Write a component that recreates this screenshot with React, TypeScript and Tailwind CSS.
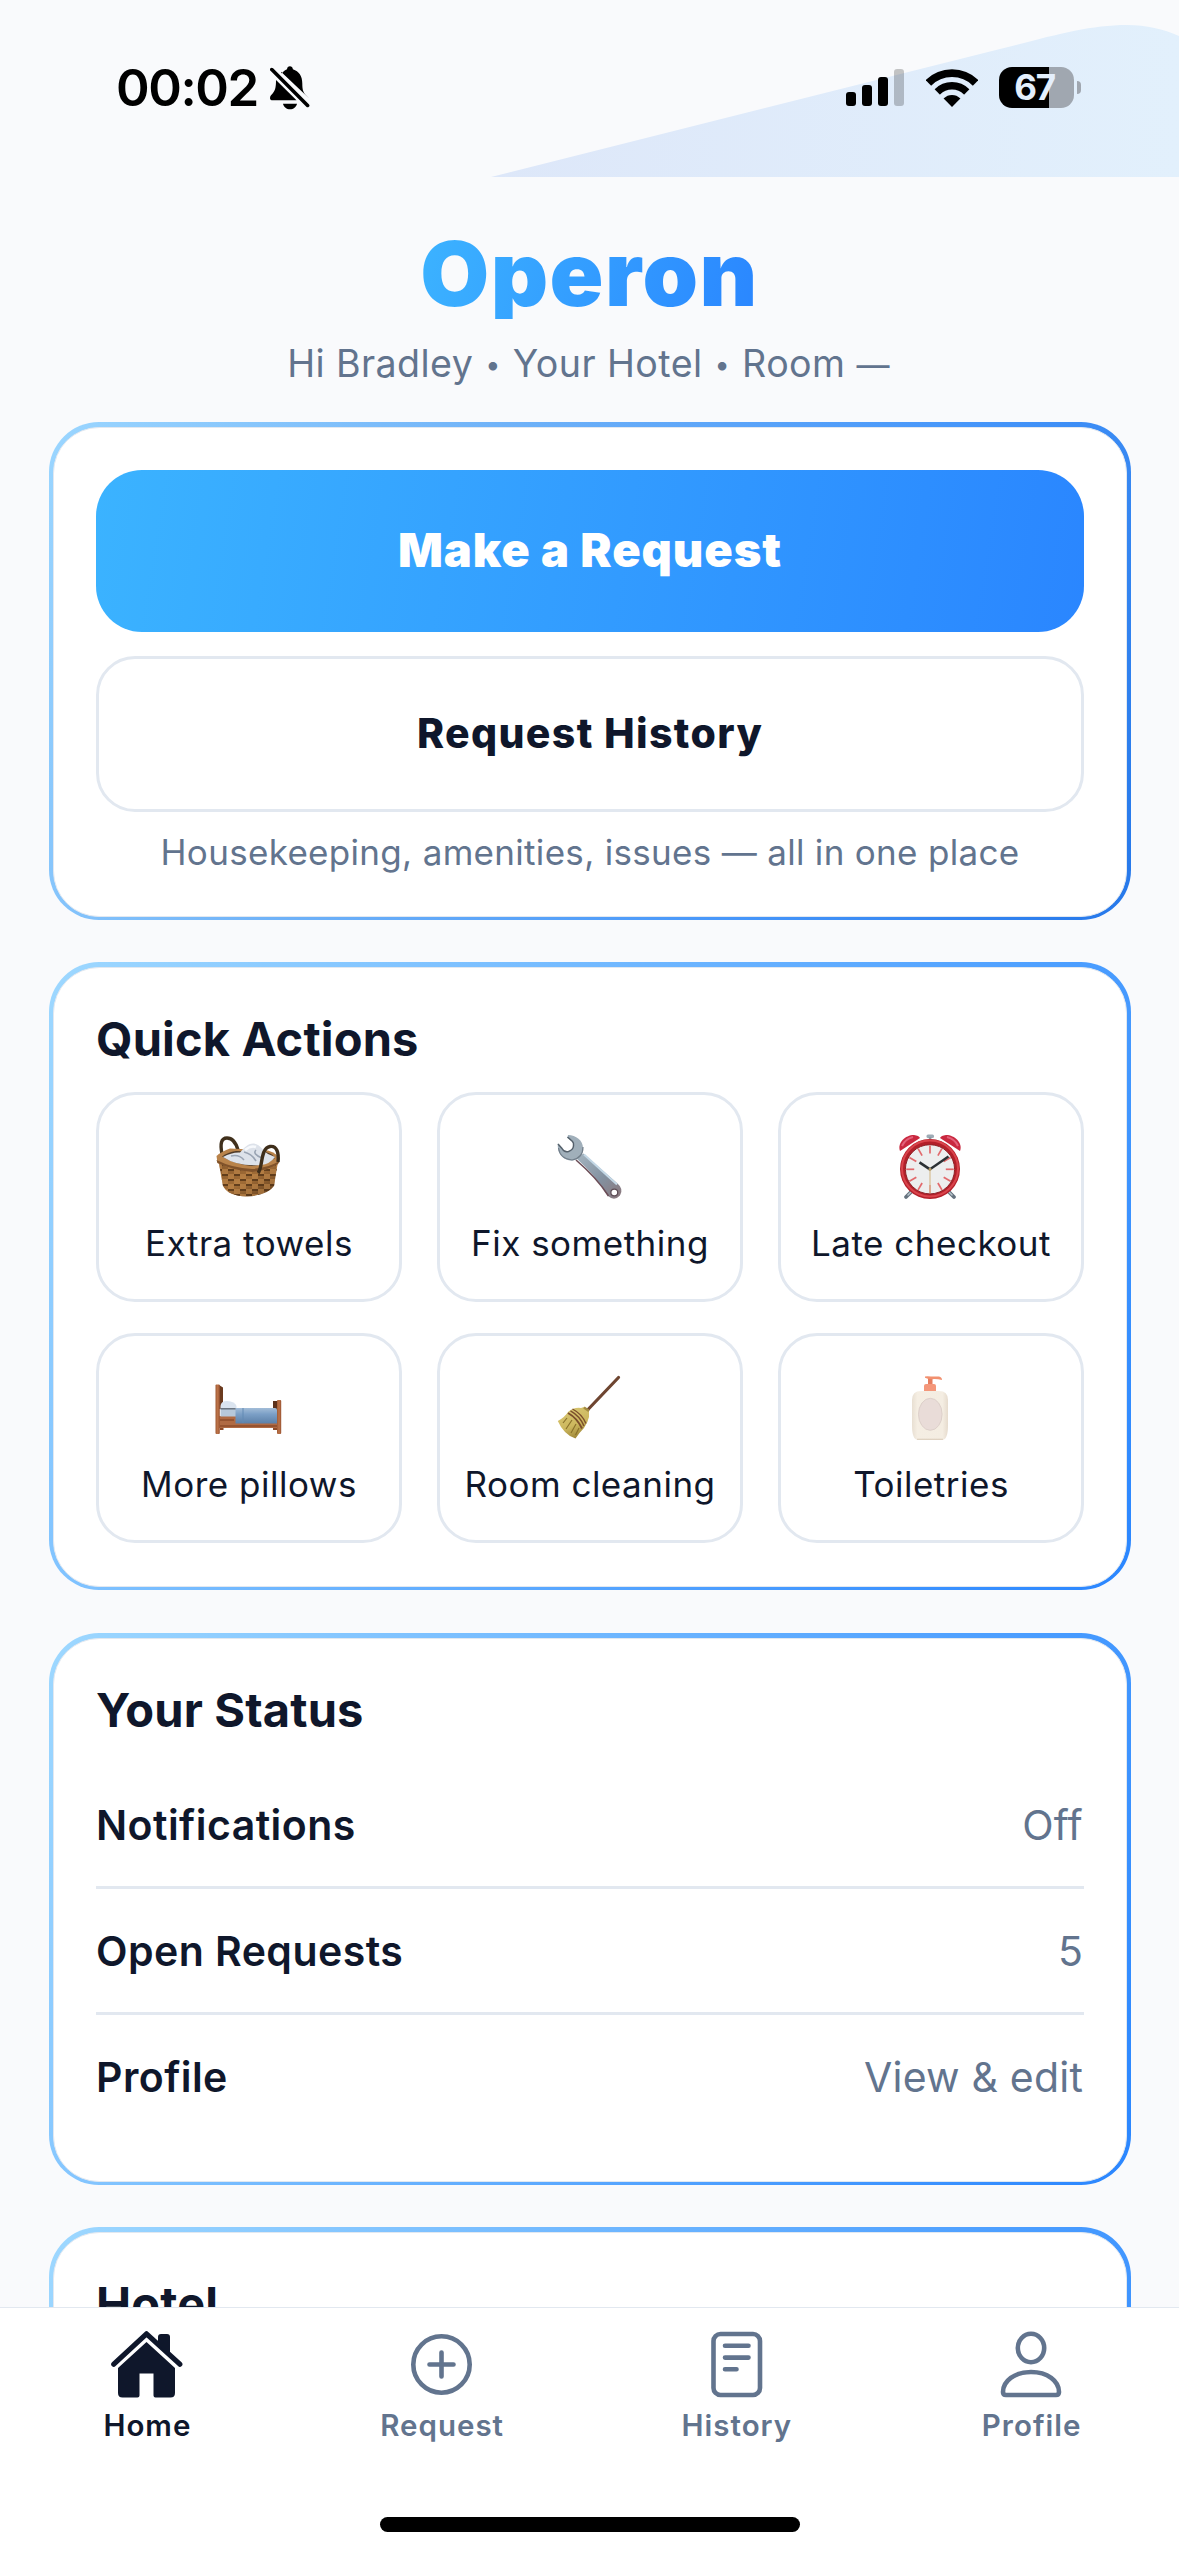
import type { ReactNode } from "react";

function BellOff() {
  return (
    <svg width="40" height="44" viewBox="0 0 40 44" className="block">
      <g fill="#000">
        <path d="M11 8.5C13.200 5.500 15 4.200 17 3.300C17.400 1 18.200 .3 19.900 .3C21.600 .3 22.500 1 22.900 3.300C29 5.400 32.300 10 32.300 17.500C32.300 23.500 33 25.600 35.300 28.500L39 32.300L11 5.800Z" />
        <path d="M6 14L26.500 34.300H2.800C.8 34.300 0 33.400 0 31.900C0 30 1.700 28.700 3 27C5.500 24 6 20 6 14Z" />
        <path d="M13 37.700H27C26.200 41.200 23.400 43.300 20 43.300C16.600 43.300 13.800 41.200 13 37.700Z" />
      </g>
      <path d="M5.600 3.200L39.500 36.500" stroke="#f9fafc" strokeWidth="3" />
      <path d="M1.800 3.600L37.600 39.400" stroke="#000" strokeWidth="3.600" strokeLinecap="round" />
    </svg>
  );
}

function Signal() {
  return (
    <svg width="58" height="37" viewBox="0 0 58 37" className="block">
      <rect x="0" y="23" width="10" height="14" rx="3" />
      <rect x="16" y="16" width="10" height="21" rx="3" />
      <rect x="32" y="8" width="10" height="29" rx="3" />
      <rect x="48" y="0" width="10" height="37" rx="3" opacity=".22" />
    </svg>
  );
}

function Wifi() {
  return (
    <svg width="52" height="38" viewBox="0 0 52 38" className="block">
      <defs>
        <clipPath id="wedge">
          <path d="M26 38L-3 8.500L-3 -6H55V8.500Z" />
        </clipPath>
      </defs>
      <g clipPath="url(#wedge)">
        <circle cx="26" cy="37.500" r="33.400" fill="none" stroke="#000" strokeWidth="7.800" />
        <circle cx="26" cy="37.500" r="20.700" fill="none" stroke="#000" strokeWidth="7.600" />
        <circle cx="26" cy="37.500" r="11.500" />
      </g>
    </svg>
  );
}

function Battery() {
  return (
    <div className="flex items-center gap-[3px]">
      <div className="flex h-[41px] w-[75px] items-center justify-center rounded-[13px] bg-[linear-gradient(90deg,#000_50px,#a0a7b0_50px)] pr-[4px]">
        <span className="text-[35px] leading-[41px] font-bold tracking-[-1.2px] text-[#e4effc]">67</span>
      </div>
      <div className="h-[13px] w-[4px] rounded-r-full bg-[#a0a7b0]" />
    </div>
  );
}

function StatusBar() {
  return (
    <div className="relative h-[177px] shrink-0 overflow-hidden">
      <svg width="1179" height="177" viewBox="0 0 1179 177" className="absolute inset-0">
        <defs>
          <linearGradient id="wave" x1="491" y1="0" x2="1179" y2="0" gradientUnits="userSpaceOnUse">
            <stop offset="0" stopColor="#dde7f9" />
            <stop offset="1" stopColor="#e2f0fc" />
          </linearGradient>
        </defs>
        <path d="M491 177L1000 49C1052 36 1088 25 1127 25C1147 25 1163 29 1179 36V177Z" fill="url(#wave)" />
      </svg>
      <div className="relative flex h-full items-start justify-between pr-[98px] pl-[116px]">
        <div className="flex items-center pt-[62px]">
          <span className="text-[51px] leading-[52px] font-semibold tracking-[-1.400px] text-black">00:02</span>
          <div className="ml-[12px]">
            <BellOff />
          </div>
        </div>
        <div className="flex items-center pt-[67px]">
          <Signal />
          <div className="ml-[22px]">
            <Wifi />
          </div>
          <div className="ml-[21px]">
            <Battery />
          </div>
        </div>
      </div>
    </div>
  );
}

function Basket() {
  return (
    <>
      <defs>
        <linearGradient id="wicker" x1="0" y1="0" x2="1" y2="1">
          <stop offset="0" stopColor="#8a5a2c" />
          <stop offset=".5" stopColor="#a06c36" />
          <stop offset="1" stopColor="#5f3c1c" />
        </linearGradient>
        <pattern id="weave" width="12" height="10" patternUnits="userSpaceOnUse">
          <rect width="6" height="5" fill="#c98f50" opacity=".5" />
          <rect x="6" y="5" width="6" height="5" fill="#c98f50" opacity=".5" />
          <rect x="6" width="6" height="2" fill="#4e3014" opacity=".75" />
          <rect y="5" width="6" height="2" fill="#4e3014" opacity=".75" />
        </pattern>
      </defs>
      <path d="M6 20C4 10 5 4 11 4C17 4 20 9 22 16" fill="none" stroke="#40301c" strokeWidth="3.400" />
      <path d="M2.500 27L7 52Q12 62 31 62.500Q52 61 58 52L62 27Z" fill="url(#wicker)" />
      <path d="M2.500 27L7 52Q12 62 31 62.500Q52 61 58 52L62 27Z" fill="url(#weave)" />
      <path d="M.5 22Q6 17 14 14.500L52 16.500Q62 20 64 25L62 30Q50 37 36 38Q16 36 1.500 29Z" fill="#b9834a" />
      <path d="M.5 26Q16 34 36 35Q52 34 63.500 27L62 30Q50 37 36 38Q16 36 1.500 29Z" fill="#80522a" />
      <path d="M6 22.500Q12 18 20 17L50 18Q57 20 59 24Q50 31 36 32Q18 30 6 22.500Z" fill="#4f3a26" />
      <path d="M7 23Q16 18 24 18.500C28 14 32 9 38 9.500C45 11 47 17 52 20L59 23Q54 30 45 31Q22 33 7 23Z" fill="#dde2ea" />
      <path d="M15 22Q23 20 28 26M28 18Q36 20 40 27M40 16Q36 20 46 24" fill="none" stroke="#9aa4b3" strokeWidth="1.600" />
      <path d="M29 16Q35 11 40 13" fill="none" stroke="#f7f9fc" strokeWidth="2.500" />
      <path d="M42 39C47 34 44 14 54 12.500C61 11.500 63 19 62 28" fill="none" stroke="#3e2e1b" strokeWidth="3.400" />
    </>
  );
}

function Wrench() {
  return (
    <>
      <defs>
        <linearGradient id="steel" x1="24" y1="24" x2="62" y2="62" gradientUnits="userSpaceOnUse">
          <stop offset="0" stopColor="#9fafbb" />
          <stop offset=".55" stopColor="#8391a0" />
          <stop offset="1" stopColor="#8a7a80" />
        </linearGradient>
      </defs>
      <path d="M19 24L26.500 19.500L60.500 49.500Q67 55 63 61.500Q57.500 67.500 51 62Q40 43 19 24Z" fill="url(#steel)" />
      <path d="M19 26Q40 44 51.500 62" fill="none" stroke="#6b4c56" strokeWidth="1.600" />
      <path d="M27 20.500L60 50.500" fill="none" stroke="#c4d8e6" strokeWidth="2" />
      <path d="M11 1C19 1 26 6.500 26 14C26.500 21 22 26 15 26.500C6 26.500 0 19 .8 9.500L5 14.500Q7 18.500 11.500 17.500Q16 16 16.500 12Q17 9 15.500 7.500L10.500 4Z" fill="#a0afba" />
      <path d="M1 10L5 14.500Q7 18.500 11.500 17.500Q16 16 16.500 12Q17 9 15.500 7.500L10.500 3" fill="none" stroke="#54606b" strokeWidth="1.500" />
      <path d="M1.500 14Q3 25 15 26Q26 24 26 13" fill="none" stroke="#727f8b" strokeWidth="1.200" />
      <circle cx="57.300" cy="58.500" r="3.400" fill="#fff" stroke="#5d4c55" strokeWidth="1.200" />
    </>
  );
}

function AlarmClock() {
  const ticks = [0, 30, 60, 90, 120, 150, 180, 210, 240, 270, 300, 330];
  return (
    <>
      <path d="M15 56L8 63M49 56L56 63" stroke="#66737f" strokeWidth="3.800" strokeLinecap="round" />
      <path d="M14 57L10 61M50 57L54 61" stroke="#bac6ce" strokeWidth="1.500" strokeLinecap="round" />
      <rect x="28.500" y=".5" width="7.500" height="3.400" rx="1.500" fill="#9eabb5" />
      <rect x="30.800" y="3" width="2.600" height="4" fill="#8d99a3" />
      <path d="M2 17C-1 9 7 1 16 1Q21 1.500 22 4Z" fill="#c9283f" />
      <path d="M62 17C65 9 57 1 48 1Q43 1.500 42 4Z" fill="#c9283f" />
      <path d="M4 12Q7 5 15 3M49 3Q57 5 60 12" fill="none" stroke="#e3607a" strokeWidth="2" />
      <circle cx="32" cy="35" r="30" fill="#b3202a" />
      <circle cx="32" cy="34.500" r="28" fill="none" stroke="#d9434b" strokeWidth="2" />
      <circle cx="32" cy="35.300" r="24.600" fill="#edeeee" stroke="#8e2227" strokeWidth="1" />
      {ticks.map((a) => (
        <path key={a} d="M32 11.500V19.500" transform={`rotate(${a} 32 35.300)`} stroke="#e2696c" strokeWidth="1.700" />
      ))}
      <path d="M32 35.300V59" stroke="#d8c29a" strokeWidth="1.300" />
      <path d="M32 35.300L21.500 28.300" stroke="#2b3033" strokeWidth="2.600" />
      <path d="M32 35.300L50.500 22.500" stroke="#2b3033" strokeWidth="2.400" />
      <circle cx="32" cy="35.300" r="1.500" fill="#b59d6a" />
    </>
  );
}

function Bed() {
  return (
    <>
      <defs>
        <linearGradient id="blanket" x1="0" y1="0" x2="0" y2="1">
          <stop offset="0" stopColor="#a3bdd8" />
          <stop offset=".4" stopColor="#7b9fc6" />
          <stop offset="1" stopColor="#5c80a8" />
        </linearGradient>
        <linearGradient id="wood" x1="0" y1="0" x2="1" y2="0">
          <stop offset="0" stopColor="#a05a34" />
          <stop offset=".5" stopColor="#bd7449" />
          <stop offset="1" stopColor="#985230" />
        </linearGradient>
      </defs>
      <path d="M3 10L7 12.500V34H3Z" fill="#6b3b1f" />
      <rect x="57" y="26" width="5" height="12" fill="#5c321c" />
      <rect x="4" y="50" width="3.500" height="5" fill="#8c4a29" />
      <rect x="57" y="50" width="4" height="5" fill="#8c4a29" />
      <rect x="3" y="41" width="59" height="12" fill="#b06a43" />
      <path d="M4 45H18M4 51H61" stroke="#8d4c2b" strokeWidth="1.500" />
      <rect x="4.500" y="34" width="16" height="7.500" fill="#b7c8da" />
      <path d="M4.500 31Q5 26 11 26Q19 26.500 20.500 31Q21 34 18 34H4.500Z" fill="#dbe4ef" />
      <path d="M4.500 33.800H20" stroke="#515a66" strokeWidth="1.200" />
      <path d="M19.500 33H59Q61 33 61 35V48.500H19.500Z" fill="url(#blanket)" />
      <path d="M27 33V48" stroke="#628ab4" strokeWidth="1" />
      <rect x="-.5" y="9.500" width="4.300" height="49.500" rx="1" fill="url(#wood)" />
      <rect x="61" y="25" width="4.200" height="34" rx="1" fill="url(#wood)" />
    </>
  );
}

function Broom() {
  return (
    <>
      <defs>
        <linearGradient id="straw" x1=".2" y1="0" x2=".6" y2="1">
          <stop offset="0" stopColor="#d8c673" />
          <stop offset=".6" stopColor="#cdb85e" />
          <stop offset="1" stopColor="#9c8436" />
        </linearGradient>
      </defs>
      <path d="M61.500 2.500L31 34.500" stroke="#6e4531" strokeWidth="3.200" strokeLinecap="round" />
      <path d="M27 32L32 35L32 42Q31 47 27 53Q22 58 18.500 63.500Q7 60 .8 46Q8 42 11 37Q17 32 24 33Z" fill="url(#straw)" />
      <path d="M6 48L10 43M9 54L15 45M14 58L19 49M18.500 60L22 53" stroke="#8a722b" strokeWidth="1.200" />
      <path d="M11 38Q20 43 25 53.500" fill="none" stroke="#7b4e2c" strokeWidth="1.900" />
      <path d="M13.500 35.800Q23 41 27 51" fill="none" stroke="#7b4e2c" strokeWidth="1.500" />
      <path d="M15.500 34Q25 39 29 48.500" fill="none" stroke="#7b4e2c" strokeWidth="1.300" />
      <path d="M27 32.500L32 36" stroke="#a38b42" strokeWidth="2.400" />
    </>
  );
}

function Lotion() {
  return (
    <>
      <defs>
        <linearGradient id="bottle" x1="0" y1="0" x2="1" y2="0">
          <stop offset="0" stopColor="#e8dfd2" />
          <stop offset=".15" stopColor="#f5eee3" />
          <stop offset=".85" stopColor="#f4ede2" />
          <stop offset="1" stopColor="#e6dbcd" />
        </linearGradient>
      </defs>
      <rect x="30" y="3" width="4.500" height="8" fill="#e67e60" />
      <path d="M27 1.500Q29 1 33 1.500H41Q44 2 44 5Q39 3.800 34 4.200Q29 4.200 27 2.800Z" fill="#f2906f" />
      <path d="M26 11Q26 9 28 9H36Q38 9 38 11V17H26Z" fill="#f4977a" />
      <path d="M14 25Q14 16 23 16H41Q50 16 50 25V50Q50 65 44 65H20Q14 65 14 50Z" fill="url(#bottle)" />
      <path d="M19 64.300H45" stroke="#ddd0bf" strokeWidth="1.200" />
      <ellipse cx="32.300" cy="39.300" rx="11.800" ry="16" fill="#e9dcd8" stroke="#ddd0ca" strokeWidth="1" />
    </>
  );
}

const actions: { label: string; icon: ReactNode }[] = [
  { label: "Extra towels", icon: <Basket /> },
  { label: "Fix something", icon: <Wrench /> },
  { label: "Late checkout", icon: <AlarmClock /> },
  { label: "More pillows", icon: <Bed /> },
  { label: "Room cleaning", icon: <Broom /> },
  { label: "Toiletries", icon: <Lotion /> },
];

function Card({ gradient, className, children }: { gradient: string; className: string; children: ReactNode }) {
  return (
    <section className={`flex shrink-0 rounded-[50px] pt-[5px] pr-[4px] pb-[3px] pl-[4px] ${gradient} ${className}`}>
      <div className="flex flex-1 flex-col rounded-[46px] border border-slate-200 bg-white px-[42px]">{children}</div>
    </section>
  );
}

function CardTitle({ children }: { children: ReactNode }) {
  return <h2 className="mt-[42px] text-[47px] leading-[58px] font-bold tracking-[0.15px]">{children}</h2>;
}

function StatusRow({ label, value }: { label: string; value: string }) {
  return (
    <div className="flex h-[123px] items-center justify-between pr-[1px] text-[41px] leading-[50px]">
      <span className="font-semibold tracking-[0.450px]">{label}</span>
      <span className="tracking-[0.200px] text-slate-500">{value}</span>
    </div>
  );
}

function HomeIcon() {
  return (
    <svg width="72" height="72" viewBox="0 0 72 72" className="block" fill="currentColor">
      <path d="M2.800 35.200L35.500 4.800L68.800 35.200" fill="none" stroke="currentColor" strokeWidth="5.200" strokeLinecap="round" strokeLinejoin="round" />
      <path d="M47 16V8Q47 5 50 5H56Q59 5 59 8V27Z" />
      <path d="M35.500 13L64 39V64Q64 68.500 59.500 68.500H44.500Q42.500 68.500 42.500 66.500V44.500H28.500V66.500Q28.500 68.500 26.500 68.500H11.500Q7 68.500 7 64V39Z" />
    </svg>
  );
}

function TabSvg({ children }: { children: ReactNode }) {
  return (
    <svg width="72" height="72" viewBox="0 0 72 72" className="block" fill="none" stroke="currentColor" strokeWidth="4.600" strokeLinecap="round" strokeLinejoin="round">
      {children}
    </svg>
  );
}

const tabs: { label: string; icon: ReactNode; color: string }[] = [
  { label: "Home", color: "text-slate-900", icon: <HomeIcon /> },
  {
    label: "Request",
    color: "text-slate-500",
    icon: (
      <TabSvg>
        <circle cx="35.500" cy="35.500" r="28.200" />
        <path d="M35.500 23.500V47.500M23.500 35.500H47.500" />
      </TabSvg>
    ),
  },
  {
    label: "History",
    color: "text-slate-500",
    icon: (
      <TabSvg>
        <rect x="12.500" y="5" width="46.500" height="61" rx="7" />
        <path d="M24 16.800H47.500M24 28.600H47.500M24 40.300H35.500" />
      </TabSvg>
    ),
  },
  {
    label: "Profile",
    color: "text-slate-500",
    icon: (
      <TabSvg>
        <ellipse cx="35" cy="19" rx="13.200" ry="14.200" />
        <path d="M7 63C7 52 18.500 43 35 43C51.500 43 63 52 63 63Q63 66 60 66H10Q7 66 7 63Z" />
      </TabSvg>
    ),
  },
];

export default function App() {
  return (
    <div className="flex h-[2556px] w-[1179px] flex-col overflow-hidden bg-[#f9fafc] font-['Inter',sans-serif] text-slate-900">
      <StatusBar />
      <main className="flex min-h-0 flex-1 flex-col overflow-hidden pt-[51px] pr-[48px] pl-[49px]">
        <h1 className="self-center bg-[linear-gradient(106deg,#3cb3ff,#2a86ff)] bg-clip-text pr-[1px] text-[89px] leading-[91px] font-black tracking-[1.500px] text-transparent">
          Operon
        </h1>
        <p className="mt-[21px] h-[47px] pr-[3px] text-center text-[37.600px] leading-[47px] tracking-[0.420px] whitespace-nowrap text-slate-500">
          Hi Bradley <span className="mx-[1px] align-[3px] text-[27px] leading-none">•</span> Your Hotel{" "}
          <span className="mx-[1px] align-[3px] text-[27px] leading-none">•</span> Room{" "}
          <span className="text-[33px] leading-none">—</span>
        </p>

        <Card className="mt-[35px] h-[498px]" gradient="bg-[linear-gradient(114.700deg,#9bd6ff,#6fb2f8_35%,#4696fa_70%,#2678ea)]">
          <button className="mt-[42px] h-[162px] rounded-[46px] bg-[linear-gradient(99deg,#3bb3ff,#2a86ff)] pb-[2px] text-[47px] font-black tracking-[0.950px] text-white">
            Make a Request
          </button>
          <button className="mt-[24px] h-[156px] rounded-[39px] border-[3px] border-slate-200 text-[41px] font-extrabold tracking-[1.350px]">
            Request History
          </button>
          <p className="mt-[18px] text-center text-[35px] leading-[45px] tracking-[0.310px] text-slate-500">
            Housekeeping, amenities, issues — all in one place
          </p>
        </Card>

        <Card className="mt-[42px] h-[628px]" gradient="bg-[linear-gradient(120deg,#9ed8ff,#2a86ff)]">
          <CardTitle>Quick Actions</CardTitle>
          <div className="mt-[24px] grid grid-cols-3 gap-x-[35px] gap-y-[31px]">
            {actions.map((a) => (
              <button key={a.label} className="flex h-[210px] flex-col items-center rounded-[39px] border-[3px] border-slate-200 pt-[39px]">
                <svg width="66" height="66" viewBox="0 0 66 66" className="block shrink-0 overflow-visible">
                  {a.icon}
                </svg>
                <span className="mt-[21px] text-[35px] leading-[45px] tracking-[0.500px] whitespace-nowrap">{a.label}</span>
              </button>
            ))}
          </div>
        </Card>

        <Card className="mt-[43px] h-[552px]" gradient="bg-[linear-gradient(117deg,#9ed8ff,#2a86ff)]">
          <CardTitle>Your Status</CardTitle>
          <div className="mt-[24px] flex flex-col divide-y-[3px] divide-slate-200">
            <div className="h-[126px]">
              <StatusRow label="Notifications" value="Off" />
            </div>
            <div className="h-[126px]">
              <StatusRow label="Open Requests" value="5" />
            </div>
            <StatusRow label="Profile" value="View & edit" />
          </div>
        </Card>

        <Card className="mt-[42px] h-[552px]" gradient="bg-[linear-gradient(117deg,#9ed8ff,#2a86ff)]">
          <CardTitle>Hotel</CardTitle>
        </Card>
      </main>

      <nav className="flex h-[249px] shrink-0 flex-col items-center justify-between border-t border-slate-200 bg-white pb-[24px]">
        <div className="grid w-full grid-cols-4 pt-[21px]">
          {tabs.map((t) => (
            <div key={t.label} className={`flex flex-col items-center ${t.color}`}>
              {t.icon}
              <span className="mt-[6px] text-[29.500px] leading-[36px] font-semibold tracking-[1px]">{t.label}</span>
            </div>
          ))}
        </div>
        <div className="h-[15px] w-[420px] rounded-full bg-black" />
      </nav>
    </div>
  );
}
